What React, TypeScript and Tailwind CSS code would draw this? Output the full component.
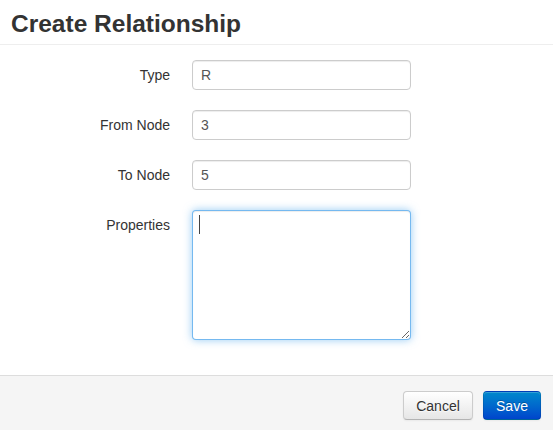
export default function App() {
  const fields = [
    { label: "Type", value: "R" },
    { label: "From Node", value: "3" },
    { label: "To Node", value: "5" },
  ];

  return (
    <div className="flex h-[430px] w-[553px] flex-col overflow-hidden bg-white font-['Liberation_Sans',Arial,sans-serif] text-[14px] text-[#333]">
      <header className="h-[45px] border-b border-[#eee] pl-[11px] pt-[9px]">
        <h3 className="text-[24.5px] font-bold leading-[30px] text-[#333]">
          Create Relationship
        </h3>
      </header>

      <div className="flex flex-col gap-[20px] pl-[10px] pt-[15px]">
        {fields.map((f) => (
          <div key={f.label} className="flex items-start gap-[22px]">
            <label className="w-[160px] pt-[5px] text-right leading-[20px]">
              {f.label}
            </label>
            <input
              type="text"
              defaultValue={f.value}
              className="h-[30px] w-[219px] rounded-[4px] border border-[#ccc] bg-white px-[8px] text-[14px] leading-[20px] text-[#555] shadow-[inset_0_1px_1px_rgba(0,0,0,0.075)] outline-none"
            />
          </div>
        ))}

        <div className="flex items-start gap-[22px]">
          <label className="w-[160px] pt-[5px] text-right leading-[20px]">
            Properties
          </label>
          <div className="relative">
            <textarea
              className="block h-[130px] w-[219px] caret-transparent rounded-[4px] border border-[rgba(82,168,236,0.8)] bg-white px-[8px] py-[4px] text-[14px] leading-[20px] text-[#555] shadow-[inset_0_1px_1px_rgba(0,0,0,0.075),0_0_8px_rgba(82,168,236,0.6)] outline-none"
            />
            <span className="absolute left-[7px] top-[5px] h-[19px] w-px bg-[#444]" />
          </div>
        </div>
      </div>

      <footer className="mt-auto flex h-[55px] justify-end gap-[10px] border-t border-[#ddd] bg-[#f5f5f5] pr-[12px] pt-[15px]">
        <button className="h-[29px] w-[70px] rounded-[4px] border border-[#ccc] border-b-[#b3b3b3] bg-gradient-to-b from-white to-[#e6e6e6] text-center text-[14px] leading-[20px] text-[#333] shadow-[inset_0_1px_0_rgba(255,255,255,0.2),0_1px_2px_rgba(0,0,0,0.05)] [text-shadow:0_1px_1px_rgba(255,255,255,0.75)]">
          Cancel
        </button>
        <button className="h-[29px] w-[58px] rounded-[4px] border border-[rgba(0,0,0,0.1)] border-b-[rgba(0,0,0,0.25)] bg-gradient-to-b from-[#0088cc] to-[#0044cc] text-center text-[14px] leading-[20px] text-white shadow-[inset_0_1px_0_rgba(255,255,255,0.2),0_1px_2px_rgba(0,0,0,0.05)] [text-shadow:0_-1px_0_rgba(0,0,0,0.25)]">
          Save
        </button>
      </footer>
    </div>
  );
}
